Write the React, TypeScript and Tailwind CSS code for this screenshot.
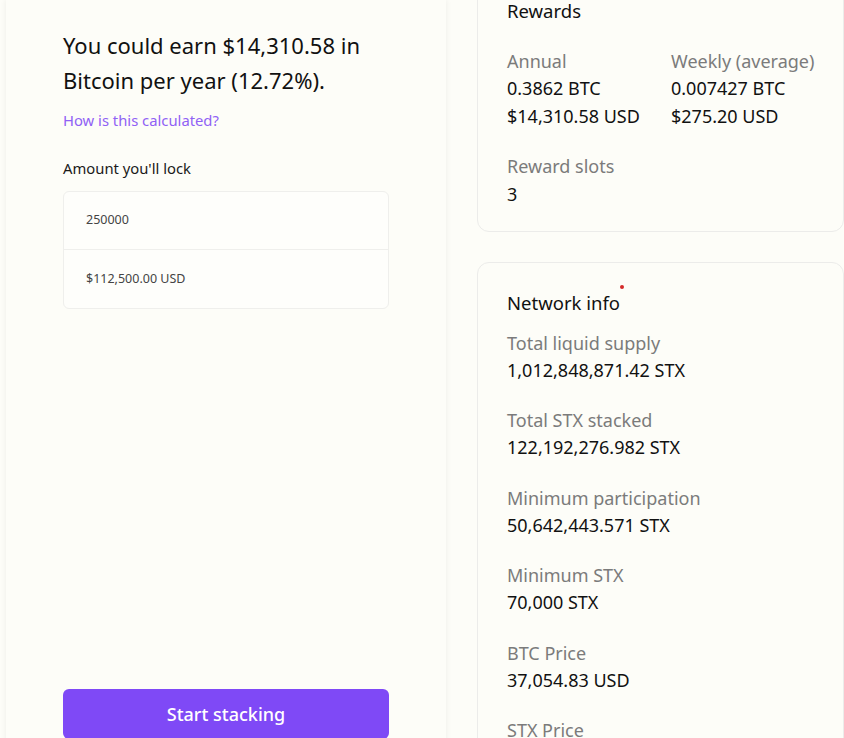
import React from 'react';

const font = { fontFamily: '"Noto Sans", "Open Sans", sans-serif' };

const networkInfo = [
  { label: 'Total liquid supply', value: '1,012,848,871.42 STX' },
  { label: 'Total STX stacked', value: '122,192,276.982 STX' },
  { label: 'Minimum participation', value: '50,642,443.571 STX' },
  { label: 'Minimum STX', value: '70,000 STX' },
  { label: 'BTC Price', value: '37,054.83 USD' },
  { label: 'STX Price', value: '2.27 USD' },
];

export default function App() {
  return (
    <div className="w-[844px] h-[738px] overflow-hidden bg-[#fdfdf8] text-[#111]" style={font}>
      <div className="flex items-start">
        {/* Left: calculator panel */}
        <div className="ml-[6px] w-[440px] h-[760px] shrink-0 bg-[#fdfdf8] shadow-[0_0_6px_rgba(0,0,0,0.07)] px-[57px] pt-[28px] pb-[21px] flex flex-col">
          <h1 className="text-[22px] leading-[35px] font-normal text-[#111]">
            You could earn $14,310.58 in Bitcoin per year (12.72%).
          </h1>
          <a className="mt-[12px] text-[14.8px] leading-[20px] text-[#9061f5] cursor-pointer">
            How is this calculated?
          </a>
          <div className="mt-[28px] text-[14.8px] leading-[20px] text-[#1a1a1a]">Amount you'll lock</div>
          <div className="mt-[13px] rounded-md border border-[#efefec] bg-[#fefefb]">
            <div className="h-[58px] flex items-center pl-[22px] text-[12.5px] text-[#444] border-b border-[#efefec]">
              250000
            </div>
            <div className="h-[58px] flex items-center pl-[22px] text-[12.5px] text-[#444]">
              $112,500.00 USD
            </div>
          </div>
          <button className="mt-auto h-[50px] w-full rounded-md bg-[#7f49f6] text-white text-[18px] font-medium">
            Start stacking
          </button>
        </div>

        {/* Right: info cards */}
        <div className="flex-1 ml-[31px] -mt-[31px] flex flex-col gap-[30px] whitespace-nowrap">
          <div className="rounded-xl border border-[#ececea] bg-[#fdfdf8] px-[29px] pt-[27px] pb-[23px]">
            <h2 className="text-[18.5px] leading-[28px] font-normal">Rewards</h2>
            <div className="mt-[22px] grid grid-cols-[164px_1fr] text-[18px] leading-[28px]">
              <div>
                <div className="text-[#7b7b7b]">Annual</div>
                <div className="-mt-[1px]">0.3862 BTC</div>
                <div>$14,310.58 USD</div>
              </div>
              <div>
                <div className="text-[#7b7b7b]">Weekly (average)</div>
                <div className="-mt-[1px]">0.007427 BTC</div>
                <div>$275.20 USD</div>
              </div>
            </div>
            <div className="mt-[22px] text-[18px] leading-[28px]">
              <div className="text-[#7b7b7b]">Reward slots</div>
              <div>3</div>
            </div>
          </div>

          <div className="rounded-xl border border-[#ececea] bg-[#fdfdf8] px-[29px] pt-[26px] pb-[24px]">
            <h2 className="relative inline-block text-[18.5px] leading-[28px] font-normal">
              Network info
              <span className="absolute -right-[4px] top-[-4px] w-[4px] h-[4px] rounded-full bg-[#d42a2a]" />
            </h2>
            <div className="mt-[12.5px] flex flex-col gap-[23.5px] text-[18px] leading-[27px]">
              {networkInfo.map((item) => (
                <div key={item.label}>
                  <div className="text-[#7b7b7b]">{item.label}</div>
                  <div>{item.value}</div>
                </div>
              ))}
            </div>
          </div>
        </div>
      </div>
    </div>
  );
}
